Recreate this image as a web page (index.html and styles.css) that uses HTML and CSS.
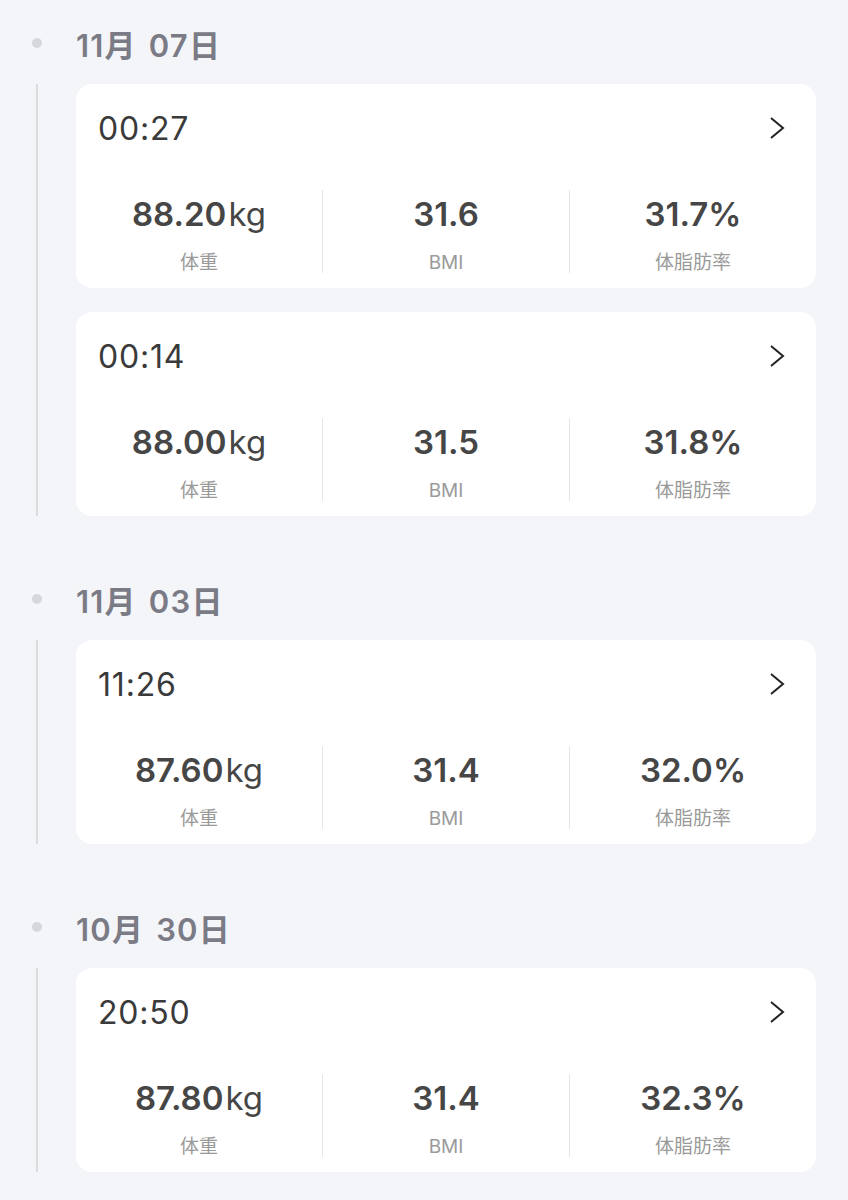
FILE: index.html
```html
<!DOCTYPE html>
<html lang="zh">
<head>
    <meta charset="UTF-8">
    <meta name="viewport" content="width=device-width, initial-scale=1.0">
    <title>体重记录</title>
    <link rel="stylesheet" href="styles.css">
</head>
<body>
    <div class="timeline">
        <div class="day">
            <div class="dayHead"><span class="dot"></span><span class="date">11月 07日</span></div>
            <div class="records">
                <div class="card">
                    <div class="cardHead">
                        <span class="time">00:27</span>
                        <svg class="arrow" width="16" height="24" viewBox="0 0 16 24"><polyline points="2,2 14,12 2,22" /></svg>
                    </div>
                    <div class="metrics">
                        <div class="metric"><div class="value">88.20<span class="unit">kg</span></div><div class="label">体重</div></div>
                        <div class="metric"><div class="value">31.6</div><div class="label">BMI</div></div>
                        <div class="metric"><div class="value">31.7%</div><div class="label">体脂肪率</div></div>
                    </div>
                </div>
                <div class="card">
                    <div class="cardHead">
                        <span class="time">00:14</span>
                        <svg class="arrow" width="16" height="24" viewBox="0 0 16 24"><polyline points="2,2 14,12 2,22" /></svg>
                    </div>
                    <div class="metrics">
                        <div class="metric"><div class="value">88.00<span class="unit">kg</span></div><div class="label">体重</div></div>
                        <div class="metric"><div class="value">31.5</div><div class="label">BMI</div></div>
                        <div class="metric"><div class="value">31.8%</div><div class="label">体脂肪率</div></div>
                    </div>
                </div>
            </div>
        </div>

        <div class="day">
            <div class="dayHead"><span class="dot"></span><span class="date">11月 03日</span></div>
            <div class="records">
                <div class="card">
                    <div class="cardHead">
                        <span class="time">11:26</span>
                        <svg class="arrow" width="16" height="24" viewBox="0 0 16 24"><polyline points="2,2 14,12 2,22" /></svg>
                    </div>
                    <div class="metrics">
                        <div class="metric"><div class="value">87.60<span class="unit">kg</span></div><div class="label">体重</div></div>
                        <div class="metric"><div class="value">31.4</div><div class="label">BMI</div></div>
                        <div class="metric"><div class="value">32.0%</div><div class="label">体脂肪率</div></div>
                    </div>
                </div>
            </div>
        </div>

        <div class="day">
            <div class="dayHead"><span class="dot"></span><span class="date">10月 30日</span></div>
            <div class="records">
                <div class="card">
                    <div class="cardHead">
                        <span class="time">20:50</span>
                        <svg class="arrow" width="16" height="24" viewBox="0 0 16 24"><polyline points="2,2 14,12 2,22" /></svg>
                    </div>
                    <div class="metrics">
                        <div class="metric"><div class="value">87.80<span class="unit">kg</span></div><div class="label">体重</div></div>
                        <div class="metric"><div class="value">31.4</div><div class="label">BMI</div></div>
                        <div class="metric"><div class="value">32.3%</div><div class="label">体脂肪率</div></div>
                    </div>
                </div>
            </div>
        </div>
    </div>
</body>
</html>
```

FILE: styles.css
```css
body {
    margin: 0;
    background-color: #f4f5f9;
    font-family: Inter, "Noto Sans CJK SC", sans-serif;
}

.timeline {
    padding: 23px 32px 30px 0;
}

/* Дата */
.day + .day {
    margin-top: 63px;
}
.dayHead {
    display: flex;
    align-items: center;
    height: 40px;
    margin-bottom: 21px;
}
.dot {
    width: 10px;
    height: 10px;
    border-radius: 50%;
    background-color: #d6d7db;
    margin-left: 32px;
    margin-right: 34px;
}
.date {
    font-size: 31px;
    font-weight: 600;
    color: #7b7b86;
    letter-spacing: 1.2px;
    word-spacing: 3px;
}

/* Записи */
.records {
    margin-left: 36px;
    border-left: 2px solid #dcdcdf;
    padding-left: 38px;
    display: flex;
    flex-direction: column;
    gap: 24px;
}
.card {
    background-color: #fff;
    border-radius: 16px;
    padding: 24px 31px 15px 22px;
}
.cardHead {
    display: flex;
    align-items: center;
    justify-content: space-between;
    height: 40px;
}
.time {
    font-size: 32px;
    color: #3a3a3a;
    letter-spacing: 0.8px;
}
.arrow polyline {
    fill: none;
    stroke: #222;
    stroke-width: 2;
}

.metrics {
    display: flex;
    margin: 42px -31px 0 -22px;
}
.metric {
    flex: 1;
    text-align: center;
}
.metric + .metric {
    border-left: 1px solid #e6e6e8;
}
.value {
    margin-top: 6px;
    font-size: 33px;
    line-height: 36px;
    font-weight: 600;
    color: #464646;
}
.unit {
    font-weight: 400;
    margin-left: 2px;
}
.label {
    margin-top: 21px;
    font-size: 19px;
    line-height: 20px;
    color: #9a9a9a;
}
```
